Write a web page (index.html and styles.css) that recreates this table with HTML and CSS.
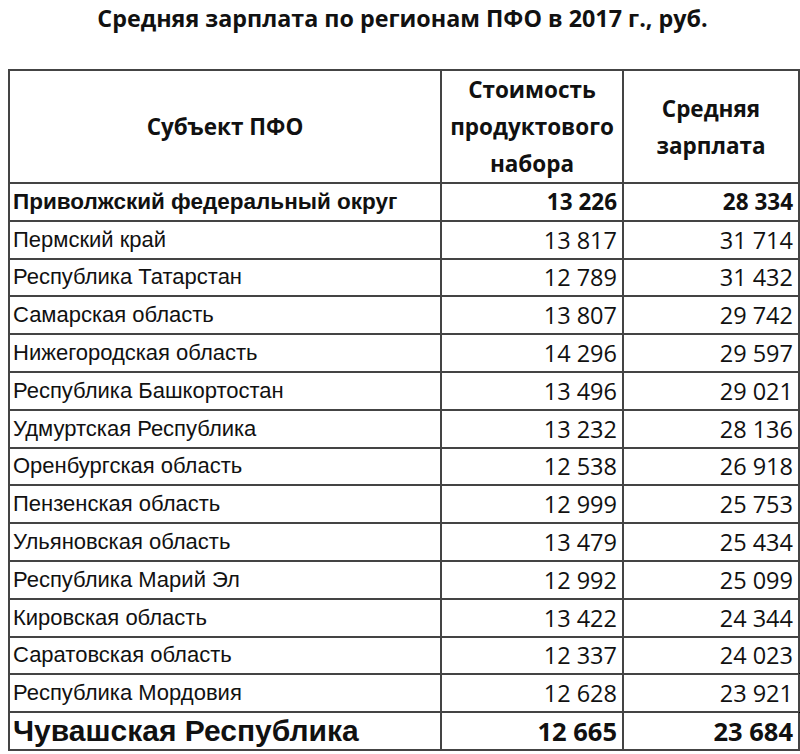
FILE: index.html
```html
<!DOCTYPE html>
<html lang="ru">
<head>
<meta charset="utf-8">
<title>Средняя зарплата по регионам ПФО</title>
<link rel="stylesheet" href="styles.css">
</head>
<body>
<div class="page">
  <h1 class="title">Средняя зарплата по регионам ПФО в 2017 г., руб.</h1>
  <table class="data">
    <colgroup>
      <col class="c-name">
      <col class="c-cost">
      <col class="c-wage">
    </colgroup>
    <thead>
      <tr class="head">
        <th>Субъект ПФО</th>
        <th>Стоимость<br>продуктового<br>набора</th>
        <th>Средняя<br>зарплата</th>
      </tr>
    </thead>
    <tbody>
      <tr class="total"><td class="name">Приволжский федеральный округ</td><td class="num">13 226</td><td class="num">28 334</td></tr>
      <tr><td class="name">Пермский край</td><td class="num">13 817</td><td class="num">31 714</td></tr>
      <tr><td class="name">Республика Татарстан</td><td class="num">12 789</td><td class="num">31 432</td></tr>
      <tr><td class="name">Самарская область</td><td class="num">13 807</td><td class="num">29 742</td></tr>
      <tr><td class="name">Нижегородская область</td><td class="num">14 296</td><td class="num">29 597</td></tr>
      <tr><td class="name">Республика Башкортостан</td><td class="num">13 496</td><td class="num">29 021</td></tr>
      <tr><td class="name">Удмуртская Республика</td><td class="num">13 232</td><td class="num">28 136</td></tr>
      <tr><td class="name">Оренбургская область</td><td class="num">12 538</td><td class="num">26 918</td></tr>
      <tr><td class="name">Пензенская область</td><td class="num">12 999</td><td class="num">25 753</td></tr>
      <tr><td class="name">Ульяновская область</td><td class="num">13 479</td><td class="num">25 434</td></tr>
      <tr><td class="name">Республика Марий Эл</td><td class="num">12 992</td><td class="num">25 099</td></tr>
      <tr><td class="name">Кировская область</td><td class="num">13 422</td><td class="num">24 344</td></tr>
      <tr><td class="name">Саратовская область</td><td class="num">12 337</td><td class="num">24 023</td></tr>
      <tr><td class="name">Республика Мордовия</td><td class="num">12 628</td><td class="num selected">23 921</td></tr>
      <tr class="focus"><td class="name">Чувашская Республика</td><td class="num">12 665</td><td class="num">23 684</td></tr>
    </tbody>
  </table>
</div>
</body>
</html>
```

FILE: styles.css
```css
html, body {
  margin: 0;
  padding: 0;
  background: #ffffff;
}

.page {
  width: 800px;
  padding: 2px 0 0 8px;
  box-sizing: border-box;
  color: #111;
}

.title {
  margin: 0;
  width: 789px;
  text-align: center;
  font-family: "Open Sans", "Noto Sans", sans-serif;
  font-weight: 700;
  font-size: 23.3px;
  line-height: 32px;
  color: #111;
}

.data {
  margin-top: 35px;
  border-collapse: collapse;
  table-layout: fixed;
  width: 790px;
}

.c-name { width: 432px; }
.c-cost { width: 182px; }
.c-wage { width: 176px; }

.data th,
.data td {
  border: 2px solid #444;
  padding: 0;
}

.head th {
  height: 110px;
  font-family: "Open Sans", "Noto Sans", sans-serif;
  font-weight: 700;
  font-size: 22.5px;
  line-height: 37px;
  text-align: center;
  vertical-align: middle;
  color: #111;
}

.data td {
  height: 35.8px;
  vertical-align: middle;
}

.name {
  padding-left: 3px !important;
  font-family: "Liberation Sans", Arial, sans-serif;
  font-size: 22px;
  white-space: nowrap;
}

.num {
  padding-right: 5px !important;
  text-align: right;
  font-family: "Open Sans", "Noto Sans", sans-serif;
  font-size: 23.5px;
}

.total .name {
  font-weight: 700;
  font-size: 22.5px;
}

.total .num {
  font-weight: 700;
  font-size: 22.5px;
}

.focus .name {
  font-weight: 700;
  font-size: 30px;
}

.focus .num {
  font-weight: 700;
  font-size: 25.5px;
}

.selected {
  position: relative;
}

.selected::after {
  content: "";
  position: absolute;
  right: -4px;
  top: -2px;
  bottom: -2px;
  width: 2px;
  border: 1px solid #000;
  border-left: 0;
}
```
